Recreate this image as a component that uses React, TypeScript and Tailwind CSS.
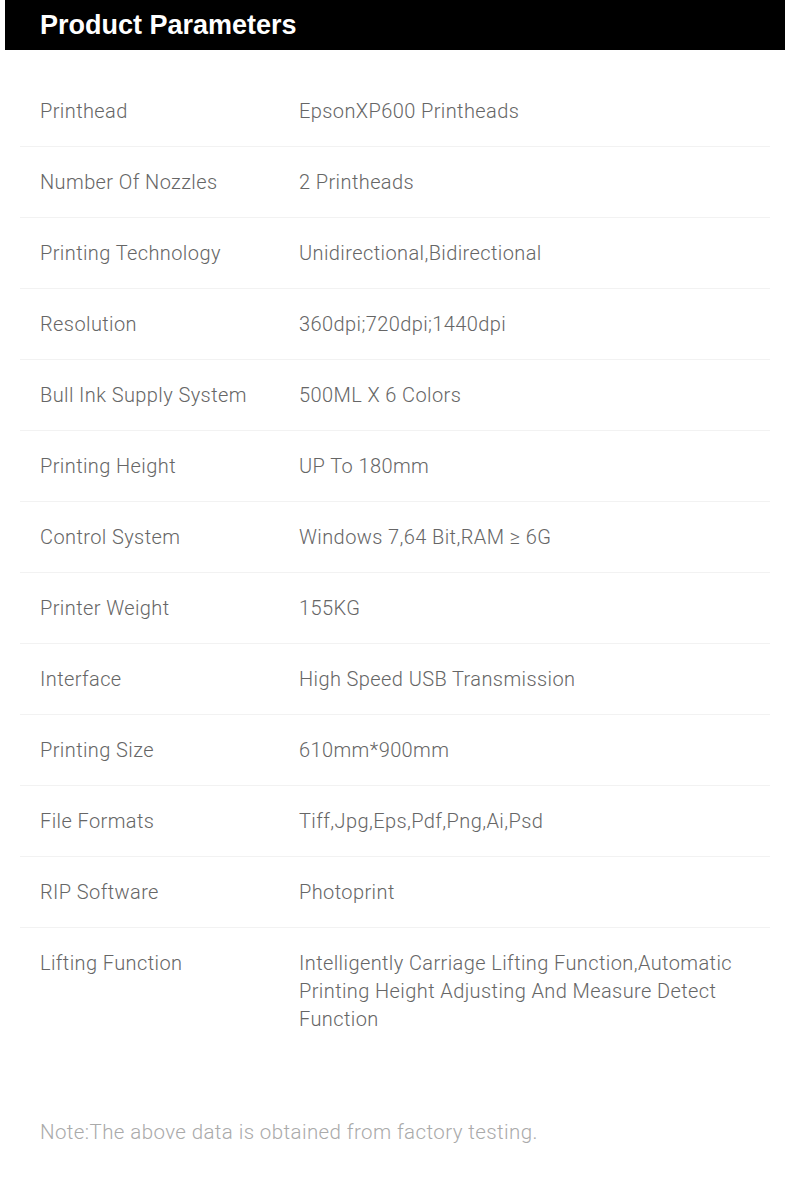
const rows: [string, string][] = [
  ["Printhead", "EpsonXP600 Printheads"],
  ["Number Of Nozzles", "2 Printheads"],
  ["Printing Technology", "Unidirectional,Bidirectional"],
  ["Resolution", "360dpi;720dpi;1440dpi"],
  ["Bull Ink Supply System", "500ML X 6 Colors"],
  ["Printing Height", "UP To 180mm"],
  ["Control System", "Windows 7,64 Bit,RAM \u2265 6G"],
  ["Printer Weight", "155KG"],
  ["Interface", "High Speed USB Transmission"],
  ["Printing Size", "610mm*900mm"],
  ["File Formats", "Tiff,Jpg,Eps,Pdf,Png,Ai,Psd"],
  ["RIP Software", "Photoprint"],
  [
    "Lifting Function",
    "Intelligently Carriage Lifting Function,Automatic Printing Height Adjusting And Measure Detect Function",
  ],
];

export default function App() {
  return (
    <div className="min-h-[1200px] w-[790px] bg-white font-['Roboto','Liberation_Sans',sans-serif]">
      <div className="mx-[5px] flex h-[50px] items-center bg-black px-[35px]">
        <h1 className="font-['Liberation_Sans',sans-serif] text-[27px] font-bold text-white">
          Product Parameters
        </h1>
      </div>
      <div className="mx-5 mt-[26px]">
        {rows.map(([label, value], i) => (
          <div
            key={label}
            className={
              "flex py-[21px] text-[20px] font-light leading-[28px] tracking-[0.4px] text-[#666] " +
              (i < rows.length - 1 ? "border-b border-[#f2f2f2]" : "")
            }
          >
            <div className="w-[279px] shrink-0 pl-5">{label}</div>
            <div className="w-[455px]">{value}</div>
          </div>
        ))}
      </div>
      <p className="mt-[64px] pl-10 text-[20.5px] font-light leading-[28px] tracking-[0.4px] text-[#aaa]">
        Note:The above data is obtained from factory testing.
      </p>
    </div>
  );
}
